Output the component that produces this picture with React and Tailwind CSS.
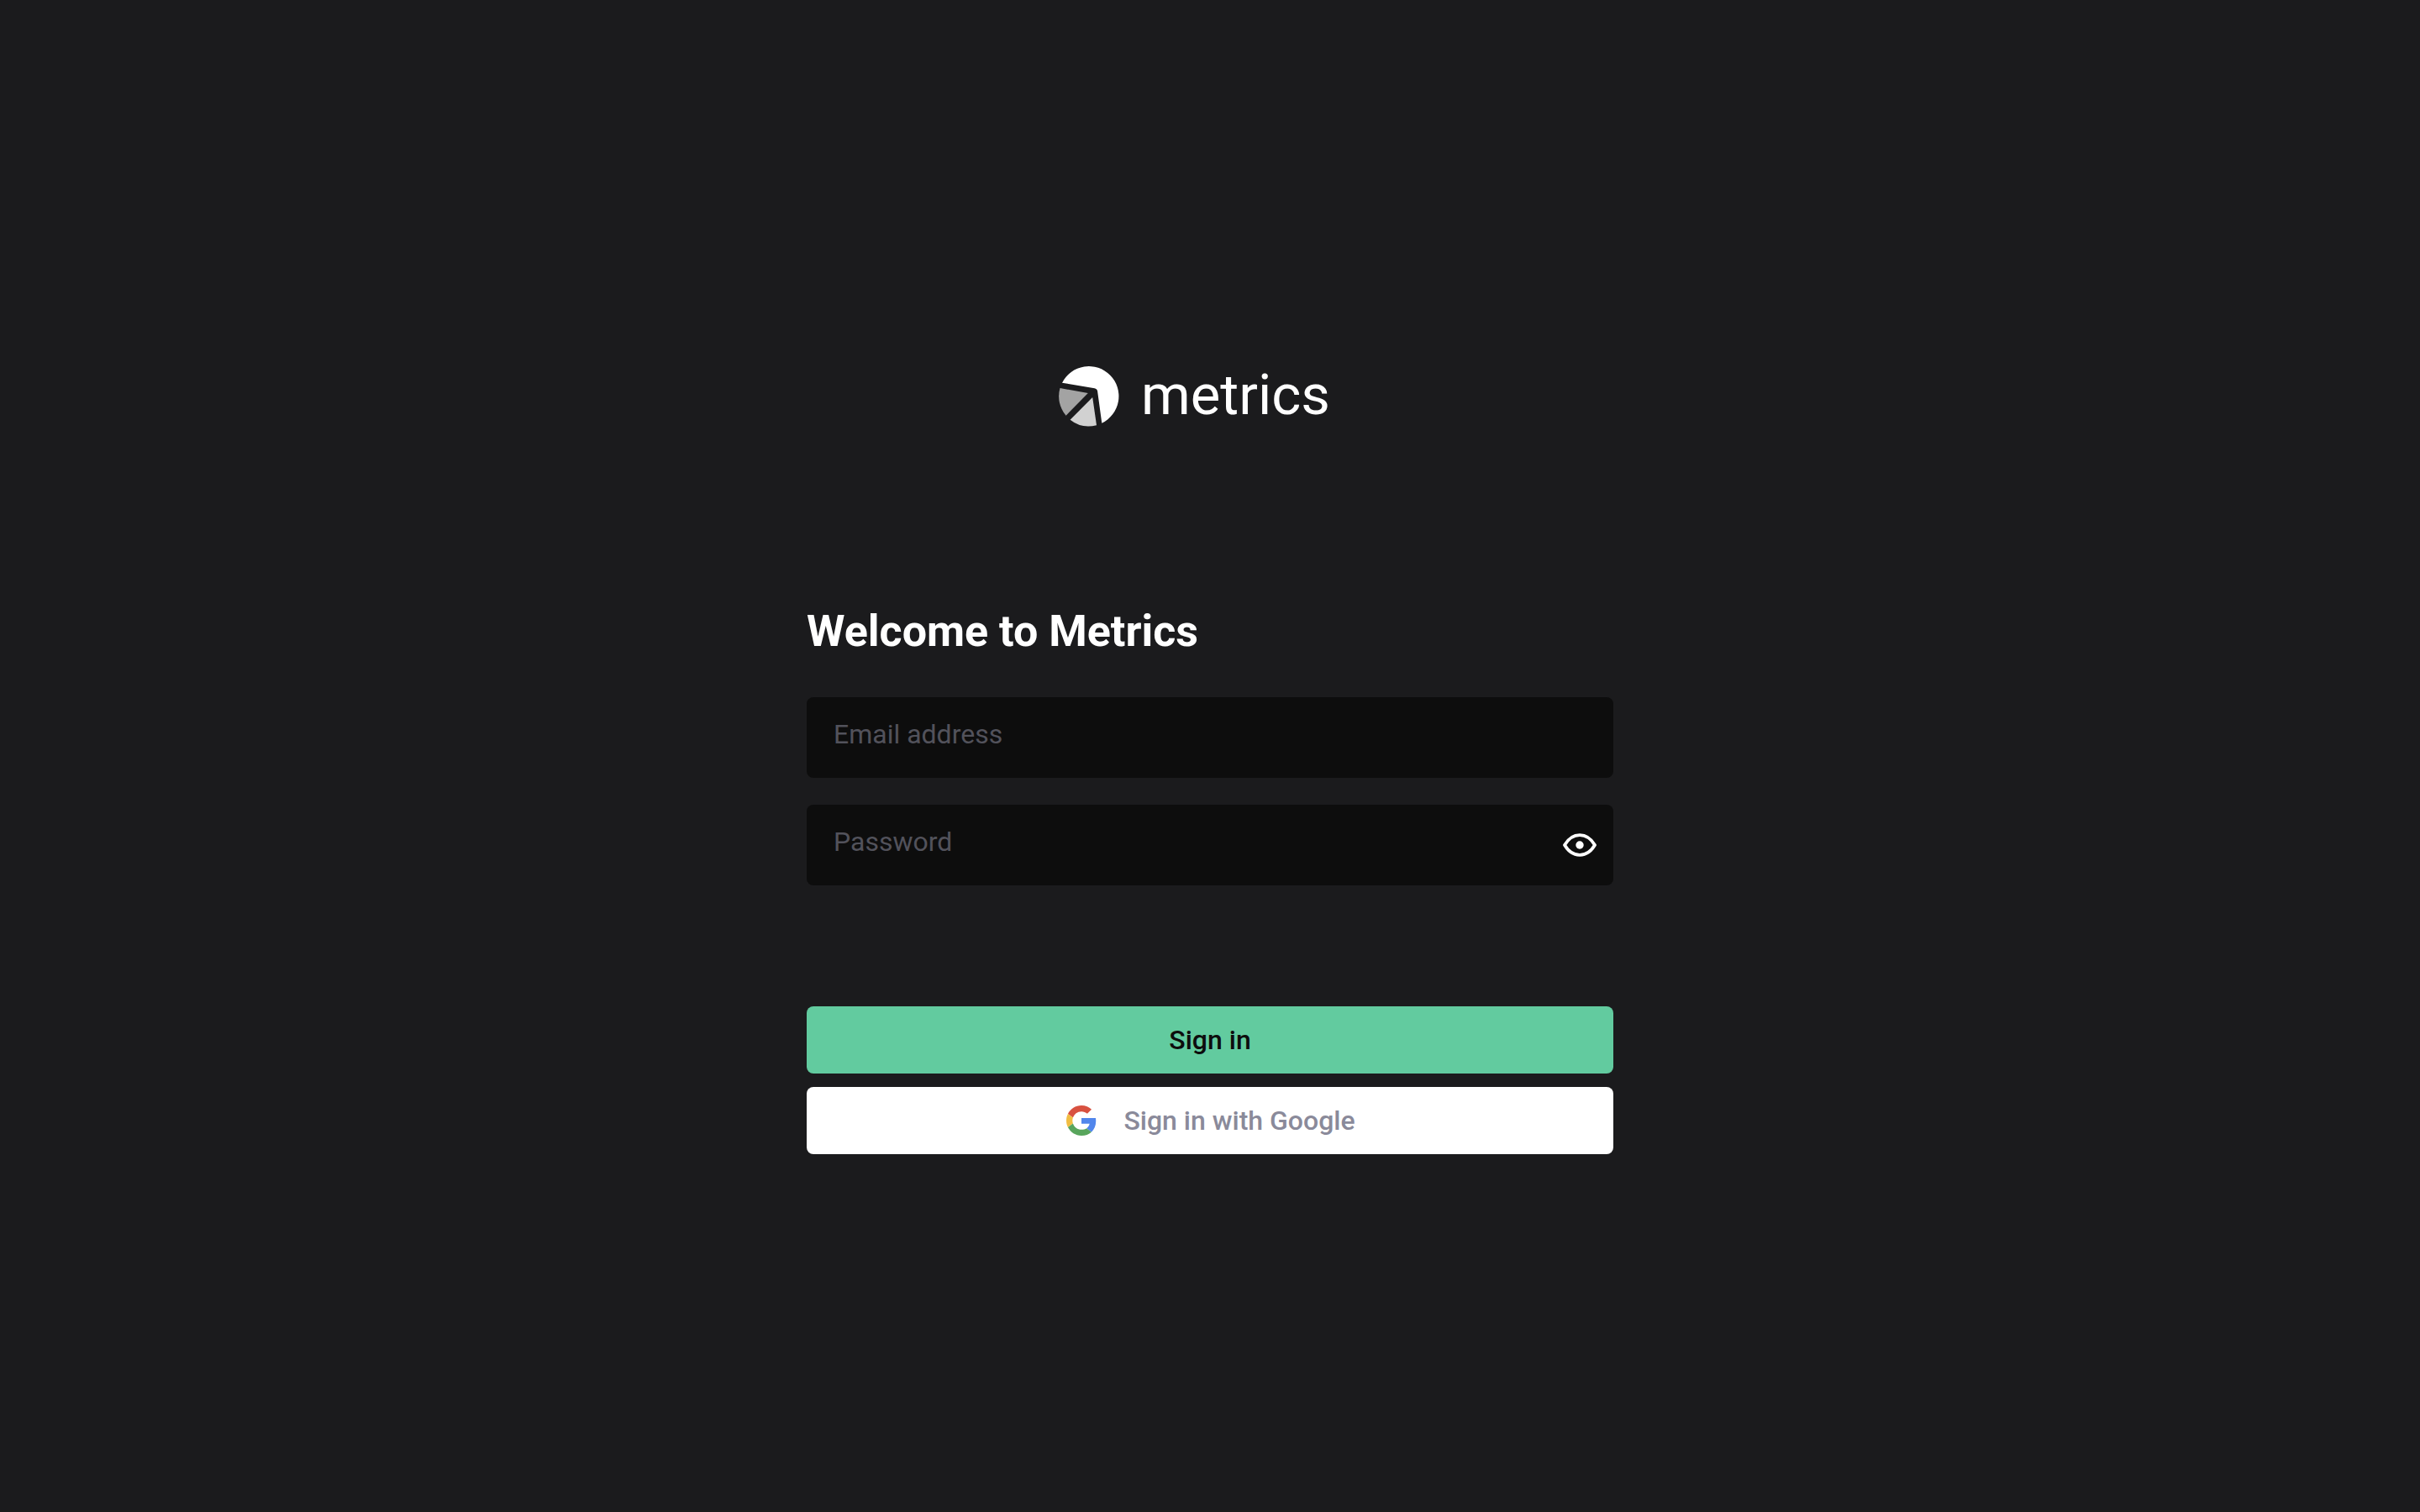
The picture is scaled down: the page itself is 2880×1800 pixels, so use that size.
import { useState } from "react";

function LogoMark() {
  return (
    <svg viewBox="0 0 72 72" className="size-[72px]" aria-hidden="true">
      <path
        fill="#ffffff"
        d="M4 19.7A35.6 35.6 0 1 1 51.3 67.7L46.1 29.8Q45.7 26.8 42.6 26.2Z"
      />
      <path fill="#a3a3a3" d="M1.5 26L34.8 32L8.6 58.8A35.6 35.6 0 0 1 1.5 26Z" />
      <path fill="#d1d1d1" d="M40.2 37L45 70.2A35.6 35.6 0 0 1 13.6 63.8Z" />
    </svg>
  );
}

function EyeIcon() {
  return (
    <svg viewBox="0 0 40 28" className="h-7 w-10" fill="none" aria-hidden="true">
      <path
        stroke="#ffffff"
        strokeWidth="3.8"
        strokeLinejoin="round"
        d="M2 14C6.5 6.5 12.5 2.2 20 2.2S33.500 6.500 38 14C33.500 21.500 27.500 25.800 20 25.800S6.500 21.500 2 14Z"
      />
      <circle cx="20" cy="14" r="4.7" fill="#ffffff" />
    </svg>
  );
}

function GoogleIcon() {
  return (
    <svg viewBox="0 0 48 48" className="size-9" aria-hidden="true">
      <path
        fill="#d85140"
        d="M24 9.500c3.540 0 6.710 1.220 9.210 3.600l6.850-6.850C35.900 2.380 30.470 0 24 0 14.620 0 6.510 5.380 2.560 13.220l7.980 6.190C12.430 13.720 17.740 9.500 24 9.500z"
      />
      <path
        fill="#5186ec"
        d="M46.980 24.550c0-1.570-.15-3.090-.38-4.550H24v9.020h12.940c-.58 2.960-2.260 5.480-4.780 7.180l7.730 6c4.510-4.180 7.090-10.360 7.090-17.650z"
      />
      <path
        fill="#f1bd42"
        d="M10.530 28.590c-.48-1.450-.76-2.990-.76-4.590s.27-3.140.76-4.590l-7.980-6.190C.92 16.460 0 20.120 0 24c0 3.880.92 7.540 2.560 10.780l7.970-6.190z"
      />
      <path
        fill="#58a55c"
        d="M24 48c6.480 0 11.930-2.130 15.890-5.810l-7.730-6c-2.150 1.450-4.920 2.300-8.160 2.300-6.260 0-11.570-4.220-13.470-9.910l-7.980 6.190C6.510 42.620 14.620 48 24 48z"
      />
    </svg>
  );
}

const fieldClass =
  "h-24 w-full rounded-lg bg-[#0d0d0d] px-8 pb-2 text-[32px] text-white outline-none placeholder:text-[#52525b]";

export default function App() {
  const [visible, setVisible] = useState(false);

  return (
    <main className="flex min-h-screen flex-col items-center justify-center bg-[#1b1b1d] pt-[10px] font-[Roboto,sans-serif] text-white">
      <div className="flex w-full max-w-[960px] flex-col">
        <div className="flex h-[72px] w-[360px] items-center gap-[26px] self-center">
          <LogoMark />
          <span className="pb-1 text-[67px] leading-[72px]">metrics</span>
        </div>

        <h1 className="mt-[212px] text-[52px] leading-[64px] font-bold">Welcome to Metrics</h1>

        <form className="mt-[46px] flex flex-col" onSubmit={(e) => e.preventDefault()}>
          <div className="flex flex-col gap-8">
            <input
              type="email"
              aria-label="Email address"
              placeholder="Email address"
              className={fieldClass}
            />
            <div className="relative">
              <input
                type={visible ? "text" : "password"}
                aria-label="Password"
                placeholder="Password"
                className={fieldClass}
              />
              <button
                type="button"
                aria-label="Show password"
                onClick={() => setVisible(!visible)}
                className="absolute inset-y-0 right-5 flex items-center"
              >
                <EyeIcon />
              </button>
            </div>
          </div>

          <div className="mt-36 flex flex-col gap-4">
            <button
              type="submit"
              className="h-20 rounded-lg bg-[#62cb9f] text-[32px] leading-10 font-medium text-[#0d0d0d]"
            >
              Sign in
            </button>
            <button
              type="button"
              className="flex h-20 items-center justify-center gap-8 rounded-lg bg-white pl-0.5 text-[32px] leading-10 font-medium text-[#8a8a9a]"
            >
              <GoogleIcon />
              Sign in with Google
            </button>
          </div>
        </form>
      </div>
    </main>
  );
}
